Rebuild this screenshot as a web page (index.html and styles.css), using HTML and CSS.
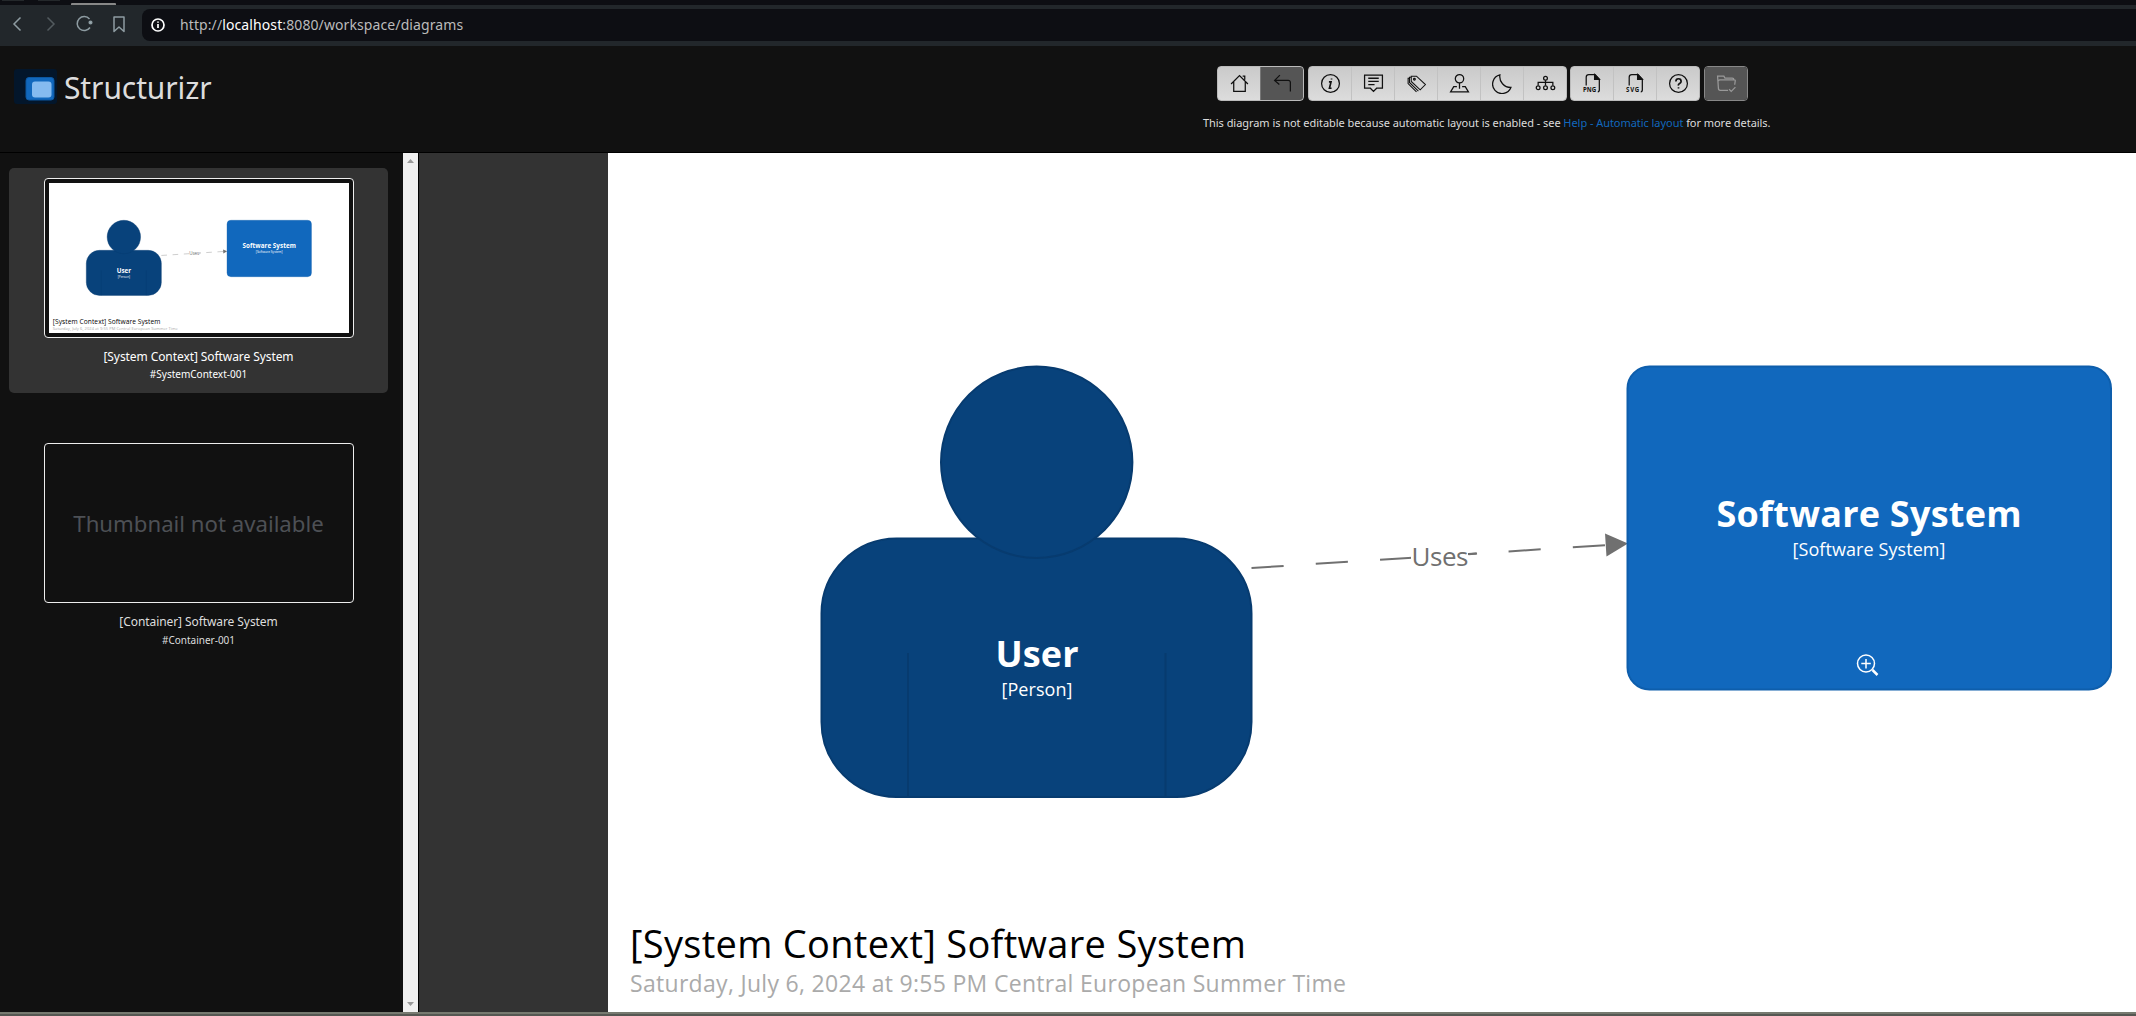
FILE: index.html
```html
<!DOCTYPE html>
<html lang="en">
<head>
<meta charset="utf-8">
<title>Structurizr</title>
<link rel="stylesheet" href="styles.css">
</head>
<body>
<div class="tabs">
  <span class="tab tab-a"></span><span class="tab tab-b"></span><span class="tab tab-active"></span>
</div>
<div class="browser-bar">
  <svg class="nav-icons" width="142" height="41" viewBox="0 0 142 41" fill="none" stroke="#8e9ca2" stroke-width="1.5">
    <path d="M20.5 12.500 14 19l6.500 6.500"/>
    <path d="M47.500 12.500 54 19l-6.500 6.500" stroke="#535b5f"/>
    <path d="M89.500 14A7 7 0 1 0 90 22.500"/>
    <circle cx="90.500" cy="17.500" r="1.300" fill="#9eb0b5"/>
    <path d="M114 12h10v14.500l-5-4.500-5 4.500z" stroke-linejoin="round"/>
  </svg>
  <div class="address">
    <svg width="16" height="16" viewBox="0 0 16 16" fill="none" stroke="#fff" stroke-width="1.700"><circle cx="8" cy="8" r="6"/><path d="M8 7v4M8 4.500v1.300"/></svg>
    <span class="url">http://<b>localhost</b>:8080/workspace/diagrams</span>
  </div>
</div>
<header class="header">
  <div class="brand">
    <svg width="43" height="35" viewBox="0 0 43 35"><rect width="43" height="35" rx="3" fill="#03162b"/><rect x="12" y="8.500" width="28" height="22.500" rx="3" fill="#1168bd" stroke="#0d57a0"/><rect x="18" y="12.500" width="19.500" height="16" rx="3" fill="#85bbf0"/></svg>
    <span>Structurizr</span>
  </div>
  <div class="controls">
    <div class="toolbar">
      <div class="group home-group">
        <span class="btn"><svg viewBox="0 0 20 20"><path d="M2 10.500 10 2.500l8 8M4.500 8.500v9h11v-9M13 3h2v3.500"/></svg></span>
        <span class="btn disabled"><svg class="dark" viewBox="0 0 20 20"><path d="M17.500 17.500V9a2 2 0 0 0-2-2H2.500M7.500 2 2.500 7l4.500 4"/></svg></span>
      </div>
      <div class="group info-group">
        <span class="btn"><svg viewBox="0 0 20 20"><circle cx="10" cy="10" r="8.500"/><path d="M8.500 8.500h2L9 14.500h2M11 5.200v1" stroke-width="1.600"/></svg></span>
        <span class="btn"><svg viewBox="0 0 20 20"><path d="M1.500 2h17v12.500H13l-3 3-3-3H1.500zM5 5h10M5 8h10M5 11h6"/></svg></span>
        <span class="btn"><svg viewBox="0 0 20 20"><path d="M5 3h5l8.500 8-5 5L5 8zM5 4 3.300 4v5l8.500 8.200M3.300 5H2v5l8 8" stroke-width="1"/><circle cx="8" cy="6" r=".8"/></svg></span>
        <span class="btn"><svg viewBox="0 0 20 20"><circle cx="10" cy="5.500" r="4"/><path d="M10 9.500V15M7.500 13H4.500l-3 5h17l-3-5h-3"/></svg></span>
        <span class="btn"><svg viewBox="0 0 20 20"><path d="M7.500 1.800A9 9 0 1 0 18 13.800 10.500 10.500 0 0 1 7.500 1.800z"/></svg></span>
        <span class="btn"><svg viewBox="0 0 20 20"><circle cx="10" cy="5" r="1.800"/><path d="M10 7v5M3 12V9h14v3"/><circle cx="3" cy="14" r="1.800"/><circle cx="10" cy="14" r="1.800"/><circle cx="17" cy="14" r="1.800"/></svg></span>
      </div>
      <div class="group export-group">
        <span class="btn"><svg viewBox="0 0 20 20"><path d="M4 12V4q0-2.500 2.500-2.500h6l4 4.500v10q0 2-1.500 2"/><path d="M12 1.500V6h4.500z" fill="#111"/><text x="1" y="18.500" textLength="12.500">PNG</text></svg></span>
        <span class="btn"><svg viewBox="0 0 20 20"><path d="M4 12V4q0-2.500 2.500-2.500h6l4 4.500v10q0 2-1.500 2"/><path d="M12 1.500V6h4.500z" fill="#111"/><text x="1" y="18.500" textLength="12.500">SVG</text></svg></span>
        <span class="btn"><svg viewBox="0 0 20 20"><circle cx="10" cy="10" r="8.500"/><path d="M7.500 8q0-2.500 2.500-2.500T12.500 8Q12.500 9 11 10t-1 2M10 13.500v1.300" stroke-width="1.600"/></svg></span>
      </div>
      <div class="group last">
        <span class="btn disabled"><svg class="muted" viewBox="0 0 20 20"><path d="M11.500 16.500H4q-1.700 0-1.700-2L1.500 3h6l1 1.800h7q1.500 0 1.500 1.500M2 7.500l1.500-1h14q1 0 .8 1.200l-.5 3.500M12.500 15.500l2 2 4-4"/></svg></span>
      </div>
    </div>
    <p class="notice">This diagram is not editable because automatic layout is enabled - see <a>Help - Automatic layout</a> for more details.</p>
  </div>
</header>
<main class="workspace">
  <aside class="sidebar">
    <div class="view selected">
      <div class="thumb">
        <svg width="300" height="150" viewBox="608 153 1718 859">
          <rect x="608" y="153" width="1718" height="859" fill="#fff"/>
          <use href="#drawing"/>
        </svg>
      </div>
      <div class="name">[System Context] Software System</div>
      <div class="key">#SystemContext-001</div>
    </div>
    <div class="view">
      <div class="thumb empty">Thumbnail not available</div>
      <div class="name">[Container] Software System</div>
      <div class="key">#Container-001</div>
    </div>
  </aside>
  <div class="scrollbar">
    <svg width="7" height="4" viewBox="0 0 7 4"><path d="M0 4 3.500 0 7 4z"/></svg>
    <svg width="7" height="4" viewBox="0 0 7 4"><path d="M0 0h7L3.500 4z"/></svg>
  </div>
  <section class="canvas">
    <svg class="diagram" width="1528" height="859" viewBox="608 153 1528 859">
      <g id="drawing">
        <g fill="#08427b" stroke="#073b6f" stroke-width="2">
          <rect x="821.500" y="538.500" width="430" height="258.500" rx="75"/>
          <circle cx="1036.700" cy="462.300" r="95.700"/>
          <path d="M908 653v143M1165.500 653v143"/>
        </g>
        <text class="element-name" x="1037" y="666.500" textLength="83">User</text>
        <text class="element-type" x="1037" y="695.500" textLength="71">[Person]</text>
        <path d="M1251.500 568 1608 545" fill="none" stroke="#707070" stroke-width="2" stroke-dasharray="32.200"/>
        <path d="M1605 533.500 1628 543.500 1606.500 556.500z" fill="#707070"/>
        <rect x="1411" y="544" width="57" height="26" fill="#fff"/>
        <path d="M1468.500 554.200 1477 553.600" stroke="#707070" stroke-width="2"/>
        <text class="relationship" x="1440" y="566" textLength="57">Uses</text>
        <rect x="1627.500" y="366.500" width="483.500" height="323" rx="22" fill="#1168bd" stroke="#0e5eac" stroke-width="2"/>
        <text class="element-name" x="1869" y="526.500" textLength="305">Software System</text>
        <text class="element-type" x="1869" y="555.500" textLength="153">[Software System]</text>
        <text class="diagram-title" x="630" y="958" textLength="616">[System Context] Software System</text>
        <text class="timestamp" x="630" y="992" textLength="716">Saturday, July 6, 2024 at 9:55 PM Central European Summer Time</text>
      </g>
      <g fill="none" stroke="#fff" stroke-width="1.500"><circle cx="1866" cy="663.500" r="8.500"/><path d="M1861.300 663.500h9.500M1866 659v9.500"/><path d="m1872.500 670 5 5" stroke-width="2.500"/></g>
    </svg>
  </section>
</main>
<footer class="window-edge"></footer>
</body>
</html>
```
FILE: styles.css
```css
* { box-sizing: border-box; }
body { margin: 0; width: 2136px; height: 1016px; overflow: hidden; display: flex; flex-direction: column; background: #111; color: #ddd; font-family: "Noto Sans", "Open Sans", sans-serif; }
.tabs { height: 5px; background: #0d0e13; display: flex; align-items: flex-start; }
.tab { height: 1px; background: #24282b; }
.tab-a { width: 22px; margin-left: 2px; }
.tab-b { width: 22px; margin-left: 14px; }
.tab-active { width: 45px; height: 2px; margin: 3px 0 0 11px; background: #888; border-radius: 1px 1px 0 0; }
.browser-bar { height: 41px; background: #22272b; display: flex; }
.nav-icons { flex: none; }
.address { flex: 1; height: 32px; margin-top: 4px; background: #0d0e13; border-radius: 8px 0 0 8px; display: flex; align-items: center; gap: 14px; padding-left: 8px; }
.url { font-size: 14px; letter-spacing: .1px; color: #bbb; white-space: nowrap; padding-bottom: 2px; }
.url b { font-weight: 400; color: #fff; }
.header { height: 107px; border-bottom: 1px solid #000; display: flex; }
.brand { display: flex; padding: 23px 0 0 14px; width: 1203px; gap: 7px; font-size: 30px; line-height: 37px; letter-spacing: -.1px; }
.toolbar { display: flex; margin: 20px 0 0 14px; }
.group { display: flex; height: 35px; background: linear-gradient(#cacaca, #dcdcdc); border: 1px solid #bbb; border-radius: 4px; overflow: hidden; margin-right: 4px; }
.home-group { width: 87px; }
.info-group { width: 259px; margin-right: 3px; }
.export-group { width: 130px; }
.group.last { width: 44px; border-color: #888; }
.btn { flex: 1; display: flex; align-items: center; justify-content: center; border-left: 1px solid #c2c2c2; }
.btn:first-child { border-left: 0; }
.btn.disabled { background: #555; border-color: #777; }
.btn svg { width: 21px; height: 21px; fill: none; stroke: #111; stroke-width: 1.2; }
.btn svg.muted { stroke: #999; }
.btn text { font: 700 5.8px "Noto Sans", sans-serif; fill: #111; stroke: none; }
.notice { margin: 14px 0 0; font-size: 11px; line-height: 16px; letter-spacing: -.05px; white-space: nowrap; color: #ddd; }
.notice a { color: #1168bd; }
.workspace { height: 859px; display: flex; }
.sidebar { width: 403px; padding: 15px 0 0 9px; display: flex; flex-direction: column; gap: 40px; }
.view { width: 379px; height: 225px; padding-top: 10px; border-radius: 5px; display: flex; flex-direction: column; align-items: center; }
.selected { background: #333; color: #fff; }
.thumb { width: 310px; height: 160px; padding: 4px; border: 1px solid #eee; border-radius: 4px; background: #111; }
.thumb svg { display: block; }
.thumb.empty { display: flex; align-items: center; justify-content: center; color: #4d5055; font-size: 22.2px; }
.name { margin-top: 9px; font-size: 12px; line-height: 20px; letter-spacing: -.08px; }
.key { font-size: 10px; line-height: 16px; }
.selected .key { line-height: 14px; }
.scrollbar { width: 15px; background: #f0f0f0; display: flex; flex-direction: column; justify-content: space-between; align-items: center; padding: 6px 0; }
.scrollbar path { fill: #999; }
.canvas { flex: 1; background: #333; border-left: 1px solid #000; padding-left: 189px; }
.diagram { display: block; background: #fff; }
.element-name, .element-type, .relationship { text-anchor: middle; }
.element-name { font: 700 36px "Open Sans", sans-serif; fill: #fff; }
.element-type { font: 18px "Open Sans", sans-serif; fill: #fff; }
.relationship { font: 26px "Open Sans", sans-serif; fill: #707070; }
.diagram-title { font: 38px "Open Sans", sans-serif; fill: #000; }
.timestamp { font: 23px "Open Sans", sans-serif; fill: #aaa; }
.window-edge { height: 4px; background: #555752; border-top: 2px solid #777a70; }
```
